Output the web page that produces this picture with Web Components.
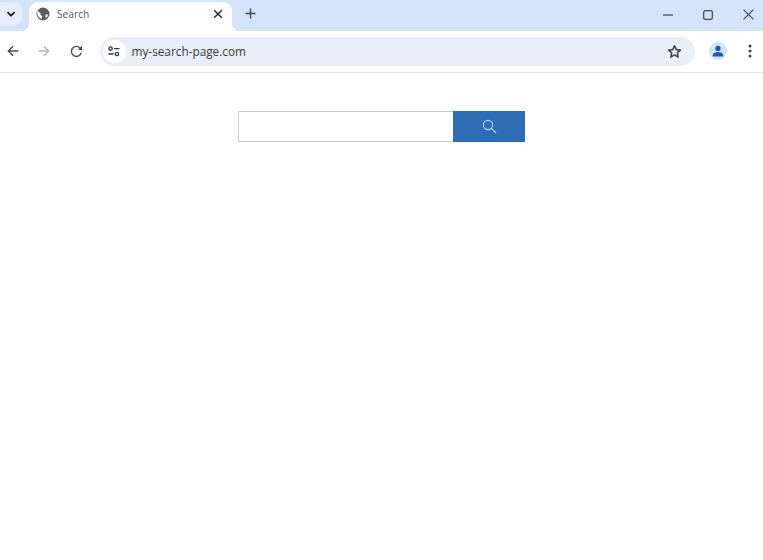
<!DOCTYPE html>
<html>
<head>
<meta charset="utf-8">
<title>Search</title>
<style>
  html, body { margin: 0; height: 100%; background: #fff; }
  body { display: flex; flex-direction: column; height: 560px; overflow: hidden; font-family: "Open Sans", "Noto Sans", sans-serif; }
</style>
</head>
<body>
<browser-tabstrip title-text="Search"></browser-tabstrip>
<browser-toolbar url="my-search-page.com"></browser-toolbar>
<search-page></search-page>

<script>
class BrowserTabstrip extends HTMLElement {
  constructor() {
    super();
    this.attachShadow({ mode: 'open' });
  }
  connectedCallback() {
    this.shadowRoot.innerHTML = `
      <style>
        :host { display: flex; height: 31px; background: #d3e3fb; flex: none; color: #1f1f1f; }
        .list {
          width: 22px; height: 24px; margin: 2px 0 0 0; border-radius: 0 9px 9px 0;
          background: #e6eefc; display: flex; align-items: center; justify-content: center;
        }
        .tab {
          position: relative; width: 203px; margin: 2px 0 0 7px; box-sizing: border-box; height: 29px;
          background: #fff; border-radius: 9px 9px 0 0; display: flex; align-items: center;
          padding: 0 9px 5px 7px; font-size: 10.2px; color: #55575b;
        }
        .tab::before, .tab::after {
          content: ""; position: absolute; bottom: 0; width: 8px; height: 8px;
          background: radial-gradient(circle at var(--c), transparent 8px, #fff 8.5px);
        }
        .tab::before { left: -8px; --c: 0 0; }
        .tab::after { right: -8px; --c: 100% 0; }
        .name { flex: 1; margin-left: 7px; }
        .new { margin: 1px 0 0 8px; width: 20px; height: 24px; display: flex; align-items: center; justify-content: center; }
        .spacer { flex: 1; }
        .win { width: 40px; height: 29px; display: flex; align-items: center; justify-content: center; }
        .controls { display: flex; margin-right: -5px; }
        svg { display: block; }
      </style>
      <div class="list">
        <svg width="10" height="10" viewBox="0 0 10 10"><path d="M1.5 3.2 5 6.7l3.5-3.5" fill="none" stroke="#1f1f1f" stroke-width="1.7"/></svg>
      </div>
      <div class="tab">
        <svg width="14" height="14" viewBox="0 0 14 14">
          <circle cx="7" cy="7" r="6.5" fill="#5a5c60"/>
          <path d="M1.6 3.6 4.6 6.4 4.4 7.6 6 9V11.8C3.8 11.6 1.6 9.6 1.3 7 1.2 5.8 1.3 4.6 1.6 3.6ZM9.6 7.4h2.4C11.9 8.8 11.2 10 10.2 11L9.4 9.4Z" fill="#fff"/>
        </svg>
        <span class="name">${this.getAttribute('title-text')}</span>
        <svg width="10" height="10" viewBox="0 0 10 10"><path d="M1.2 1.2l7.6 7.6M8.8 1.2 1.2 8.8" stroke="#2a2a2a" stroke-width="1.5" fill="none"/></svg>
      </div>
      <div class="new">
        <svg width="11" height="11" viewBox="0 0 11 11"><path d="M5.5.5v10M.5 5.5h10" stroke="#45494e" stroke-width="1.4" fill="none"/></svg>
      </div>
      <div class="spacer"></div>
      <div class="controls">
        <div class="win"><svg width="10" height="10" viewBox="0 0 10 10"><path d="M0 5h10" stroke="#45494e" stroke-width="1.3"/></svg></div>
        <div class="win"><svg width="10" height="10" viewBox="0 0 10 10"><rect x=".7" y=".7" width="8.6" height="8.6" rx="1.6" fill="none" stroke="#45494e" stroke-width="1.3"/></svg></div>
        <div class="win"><svg width="11" height="11" viewBox="0 0 11 11"><path d="M.6.6l9.8 9.8M10.4.6.6 10.4" stroke="#45494e" stroke-width="1.2" fill="none"/></svg></div>
      </div>
    `;
  }
}

class BrowserToolbar extends HTMLElement {
  constructor() {
    super();
    this.attachShadow({ mode: 'open' });
  }
  connectedCallback() {
    this.shadowRoot.innerHTML = `
      <style>
        :host { display: flex; align-items: center; height: 42px; box-sizing: border-box; background: #fff; border-bottom: 1px solid #e6e6e6; flex: none; padding: 0 0 1px 0; }
        .btn { width: 31.5px; height: 28px; display: flex; align-items: center; justify-content: center; flex: none; }
        .nav { display: flex; margin-left: -3px; margin-right: 8px; }
        .reload { margin-left: 1px; margin-right: -1px; }
        .omni { flex: none; width: 595px; height: 29px; background: #e9eef8; border-radius: 15px; display: flex; align-items: center; box-sizing: border-box; padding: 0 13px 0 3px; }
        .tune { width: 23px; height: 23px; border-radius: 50%; background: #fff; display: flex; align-items: center; justify-content: center; flex: none; }
        .url { flex: 1; margin-left: 6px; font-size: 11.8px; color: #3a3d41; }
        .avatar { width: 18px; height: 18px; border-radius: 50%; background: #d3e3fd; display: flex; align-items: center; justify-content: center; margin-left: 14px; flex: none; }
        .more { margin-left: 21px; flex: none; }
        svg { display: block; }
      </style>
      <div class="nav">
        <div class="btn"><svg width="12" height="12" viewBox="0 0 12 12"><path d="M11.5 6H1.5M6 1.3 1.3 6 6 10.7" fill="none" stroke="#4a4c50" stroke-width="1.4"/></svg></div>
        <div class="btn"><svg width="12" height="12" viewBox="0 0 12 12"><path d="M.5 6h10M6 1.3 10.7 6 6 10.7" fill="none" stroke="#b0b2b5" stroke-width="1.4"/></svg></div>
        <div class="btn reload"><svg width="13" height="13" viewBox="0 0 13 13"><path d="M11.2 7.6A5 5 0 1 1 10 3L11.6 4.6" fill="none" stroke="#4a4c50" stroke-width="1.4"/><path d="M12 .8V5H7.8Z" fill="#4a4c50"/></svg></div>
      </div>
      <div class="omni">
        <div class="tune">
          <svg width="12" height="11" viewBox="0 0 12 11">
            <circle cx="2.6" cy="2.6" r="1.7" fill="none" stroke="#33363a" stroke-width="1.3"/>
            <path d="M6 2.6h5.5M.5 8h5.2" stroke="#33363a" stroke-width="1.4" fill="none"/>
            <circle cx="9" cy="8" r="1.7" fill="none" stroke="#33363a" stroke-width="1.3"/>
          </svg>
        </div>
        <div class="url">${this.getAttribute('url')}</div>
        <svg width="15" height="15" viewBox="0 0 24 24"><path d="M12 2.8l2.8 6.2 6.7.7-5 4.5 1.4 6.7L12 17.5l-5.9 3.4 1.4-6.7-5-4.5 6.7-.7Z" fill="none" stroke="#3f4246" stroke-width="2.5" stroke-linejoin="round"/></svg>
      </div>
      <div class="avatar">
        <svg width="12" height="12" viewBox="0 0 12 12"><circle cx="6" cy="3.4" r="2.6" fill="#2257b8"/><path d="M.8 11.4V10c0-2 3-3 5.2-3s5.2 1 5.2 3v1.4Z" fill="#2257b8"/></svg>
      </div>
      <div class="more">
        <svg width="4" height="14" viewBox="0 0 4 14"><circle cx="2" cy="2" r="1.5" fill="#3f4246"/><circle cx="2" cy="7" r="1.5" fill="#3f4246"/><circle cx="2" cy="12" r="1.5" fill="#3f4246"/></svg>
      </div>
    `;
  }
}

class SearchPage extends HTMLElement {
  constructor() {
    super();
    this.attachShadow({ mode: 'open' });
  }
  connectedCallback() {
    this.shadowRoot.innerHTML = `
      <style>
        :host { display: flex; justify-content: center; align-items: flex-start; flex: 1; background: #fff; padding-top: 38px; }
        .box { display: flex; height: 31px; width: 287px; }
        .input { flex: 1; box-sizing: border-box; border: 1px solid #c8cacd; border-right: 0; background: #fff; }
        .go { width: 72px; background: #2d6db5; display: flex; align-items: center; justify-content: center; }
        svg { display: block; }
      </style>
      <div class="box">
        <div class="input"></div>
        <div class="go">
          <svg width="15" height="15" viewBox="0 0 15 15"><circle cx="6" cy="6" r="4.6" fill="none" stroke="#bcd6f0" stroke-width="1.1"/><path d="M9.4 9.4 14 14" stroke="#bcd6f0" stroke-width="1.2" fill="none"/></svg>
        </div>
      </div>
    `;
  }
}

customElements.define('browser-tabstrip', BrowserTabstrip);
customElements.define('browser-toolbar', BrowserToolbar);
customElements.define('search-page', SearchPage);
</script>
</body>
</html>
